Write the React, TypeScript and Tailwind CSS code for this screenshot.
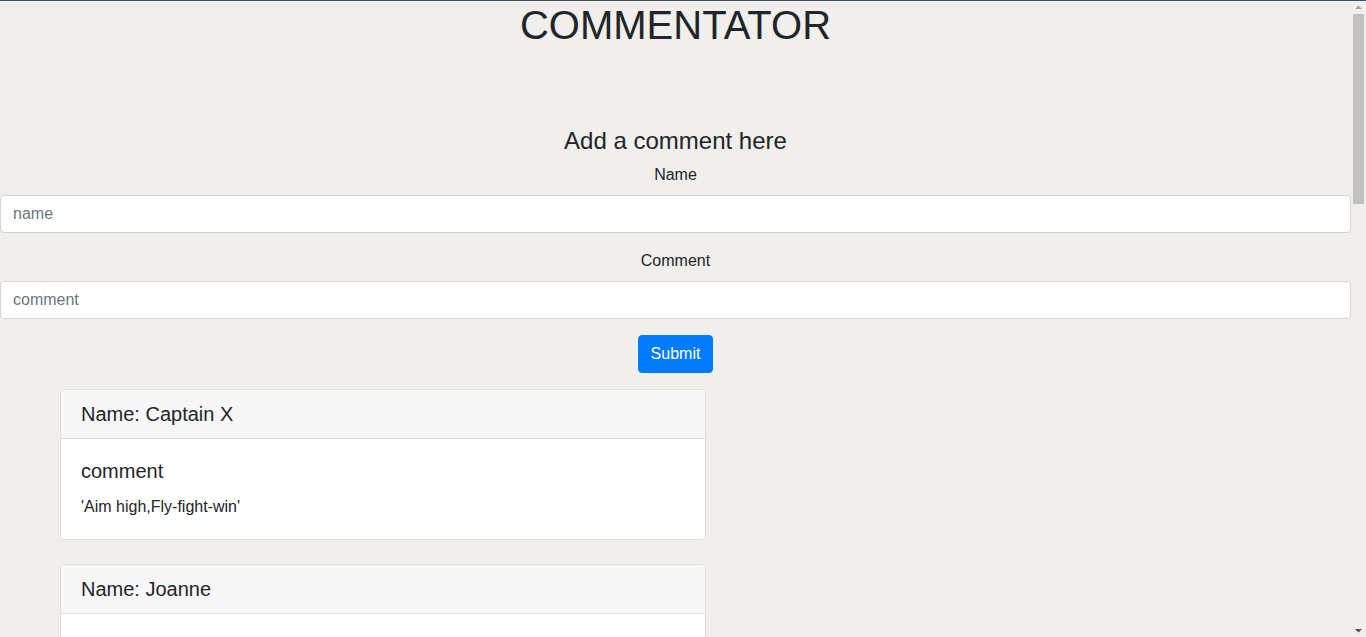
const comments = [
  { name: "Captain X", text: "'Aim high,Fly-fight-win'" },
  { name: "Joanne", text: "'Great work, keep it up'" },
  { name: "Mike", text: "'This is awesome'" },
  { name: "Sarah", text: "'Nice app'" },
  { name: "Tom", text: "'Hello there'" },
  { name: "Lucy", text: "'Love it'" },
  { name: "Peter", text: "'Well done'" },
  { name: "Anna", text: "'Keep going'" },
  { name: "James", text: "'Cool stuff'" },
];

const ScrollBar = () => (
  <div className="w-[15px] flex-none flex flex-col items-center bg-[#f0efeb]">
    <svg width="15" height="13" viewBox="0 0 15 13" className="flex-none">
      <path d="M4 8 L11 8 L7.5 4.5 Z" fill="#a3a3a3" />
    </svg>
    <div className="w-[11px] h-[190px] bg-[#c1c1c1] flex-none" />
    <div className="flex-1" />
    <svg width="15" height="13" viewBox="0 0 15 13" className="flex-none">
      <path d="M4 5 L11 5 L7.5 8.5 Z" fill="#505050" />
    </svg>
  </div>
);

const App = () => {
  const inputClass =
    "w-full h-[38px] px-3 bg-white border border-[#ced4da] rounded-[4px] text-base text-[#495057] placeholder:text-[#6c757d] outline-none";

  return (
    <div className="h-screen flex bg-[#f0efeb] border-t border-[#3b5166] text-[#212529] font-['Liberation_Sans',Arial,sans-serif] overflow-hidden">
      <div className="flex-1 min-w-0 overflow-hidden">
        <h1 className="text-[40px] leading-[48px] text-center mb-[78px]">COMMENTATOR</h1>

        <div className="flex flex-col items-center">
          <h4 className="text-[24px] leading-[28px] mb-2">Add a comment here</h4>
          <label className="text-base leading-6 mb-2">Name</label>
          <input className={inputClass} placeholder="name" />
          <label className="text-base leading-6 mt-4 mb-2">Comment</label>
          <input className={inputClass} placeholder="comment" />
          <button className="mt-4 h-[38px] px-3 bg-[#007bff] border border-[#007bff] text-white text-base leading-6 rounded-[4px]">
            Submit
          </button>
        </div>

        <div className="ml-[60px] w-[646px] mt-4">
          {comments.map((c) => (
            <div key={c.name} className="mb-6 bg-white border border-[#dfdedb] rounded-[4px]">
              <div className="px-5 py-3 bg-[#f7f7f7] border-b border-[#dfdfdf] rounded-t-[4px]">
                <h5 className="text-[20px] leading-6">Name: {c.name}</h5>
              </div>
              <div className="p-5">
                <h5 className="text-[20px] leading-6 mb-3">comment</h5>
                <p className="text-base leading-6">{c.text}</p>
              </div>
            </div>
          ))}
        </div>
      </div>
      <ScrollBar />
    </div>
  );
};

export default App;
